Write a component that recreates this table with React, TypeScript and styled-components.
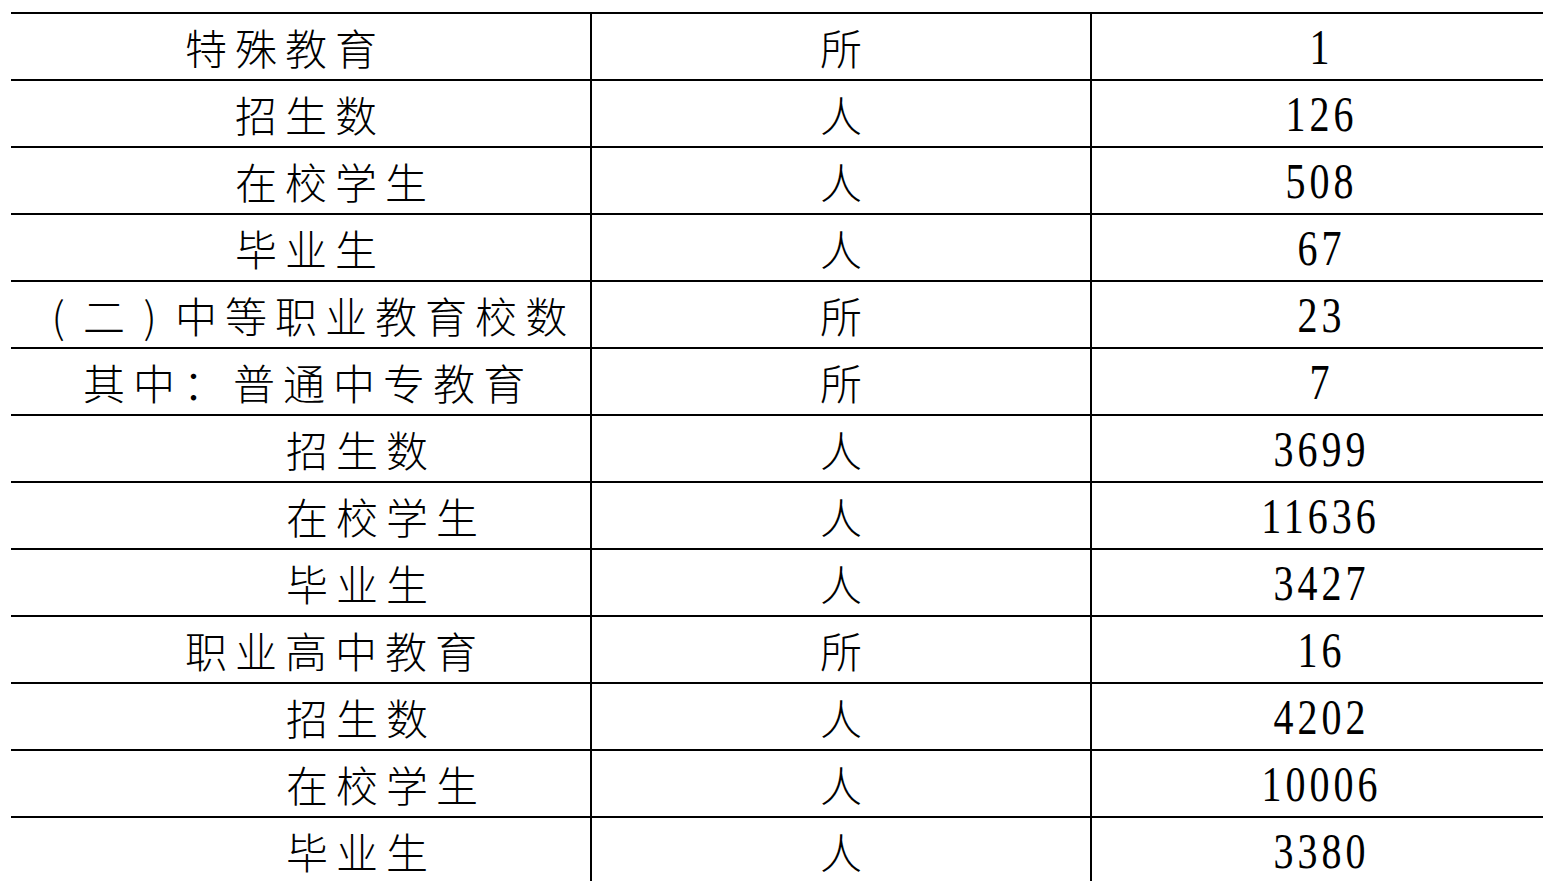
import styled, { createGlobalStyle } from 'styled-components'

const GlobalStyle = createGlobalStyle`
  html, body {
    margin: 0;
    padding: 0;
    background: #fff;
    overflow: hidden;
  }
`

type Item = {
  name: string
  unit: string
  value: string
  indent: number
}

const rows: Item[] = [
  { name: '特殊教育', unit: '所', value: '1', indent: 174 },
  { name: '招生数', unit: '人', value: '126', indent: 224 },
  { name: '在校学生', unit: '人', value: '508', indent: 224 },
  { name: '毕业生', unit: '人', value: '67', indent: 224 },
  { name: '(二)中等职业教育校数', unit: '所', value: '23', indent: 30 },
  { name: '其中：普通中专教育', unit: '所', value: '7', indent: 72 },
  { name: '招生数', unit: '人', value: '3699', indent: 275 },
  { name: '在校学生', unit: '人', value: '11636', indent: 275 },
  { name: '毕业生', unit: '人', value: '3427', indent: 275 },
  { name: '职业高中教育', unit: '所', value: '16', indent: 174 },
  { name: '招生数', unit: '人', value: '4202', indent: 275 },
  { name: '在校学生', unit: '人', value: '10006', indent: 275 },
  { name: '毕业生', unit: '人', value: '3380', indent: 275 },
]

// half-width brackets get their own box so they sit like the other glyphs
function renderName(name: string) {
  return name.split('').map((ch, i) =>
    ch === '(' || ch === ')' ? <Bracket key={i}>{ch}</Bracket> : ch
  )
}

function App() {
  return (
    <Page>
      <GlobalStyle />
      <Table>
        {rows.map((row, index) => (
          <Row key={index}>
            <NameCell $indent={row.indent}>{renderName(row.name)}</NameCell>
            <UnitCell>{row.unit}</UnitCell>
            <ValueCell>
              <Digits>{row.value}</Digits>
            </ValueCell>
          </Row>
        ))}
      </Table>
    </Page>
  )
}

export default App

const Page = styled.div`
  padding: 12px 0 0 11px;
  width: 1543px;
  height: 881px;
  box-sizing: border-box;
  overflow: hidden;
  background: #fff;
`

const Table = styled.div`
  display: flex;
  flex-direction: column;
  width: 1535px;
`

const Row = styled.div`
  display: grid;
  grid-template-columns: 579px 500px 456px;
  height: 67px;
  box-sizing: border-box;
  border-top: 2px solid #000;
  flex-shrink: 0;
`

const NameCell = styled.div<{ $indent: number }>`
  display: flex;
  align-items: center;
  padding-left: ${p => p.$indent}px;
  font-family: 'Noto Sans CJK SC', sans-serif;
  font-weight: 300;
  font-size: 42px;
  line-height: 1;
  letter-spacing: 8px;
  color: #000;
  white-space: nowrap;
`

const Bracket = styled.span`
  display: inline-block;
  width: 34px;
  margin-right: 8px;
  text-align: center;
  letter-spacing: 0;
`

const UnitCell = styled.div`
  display: flex;
  align-items: center;
  justify-content: center;
  border-left: 2px solid #000;
  font-family: 'Noto Sans CJK SC', sans-serif;
  font-weight: 300;
  font-size: 42px;
  line-height: 1;
  color: #000;
`

const ValueCell = styled.div`
  display: flex;
  align-items: center;
  justify-content: center;
  border-left: 2px solid #000;
`

const Digits = styled.span`
  display: inline-block;
  font-family: 'Liberation Serif', 'Times New Roman', serif;
  font-size: 50px;
  line-height: 1;
  letter-spacing: 5px;
  padding-left: 5px;
  color: #000;
  transform: scaleX(0.8);
`
